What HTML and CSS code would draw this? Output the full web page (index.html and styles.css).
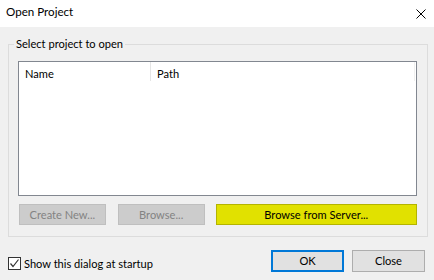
FILE: index.html
```html
<!DOCTYPE html>
<html lang="en">
<head>
    <meta charset="UTF-8">
    <meta name="viewport" content="width=device-width, initial-scale=1.0">
    <title>Open Project</title>
    <link rel="stylesheet" href="styles.css">
</head>
<body>
    <div class="titlebar">
        <span class="title">Open Project</span>
        <svg class="close-x" width="10" height="10" viewBox="0 0 10 10">
            <path d="M0.5 0.5 L9.5 9.5 M9.5 0.5 L0.5 9.5" stroke="#000" stroke-width="1" fill="none"/>
        </svg>
    </div>

    <fieldset class="group">
        <legend>Select project to open</legend>
        <div class="list">
            <div class="list-header">
                <div class="col col-name">Name</div>
                <div class="col col-path">Path</div>
            </div>
        </div>
        <div class="actions">
            <button class="btn btn-disabled btn-create" disabled>Create New...</button>
            <button class="btn btn-disabled btn-browse" disabled>Browse...</button>
            <button class="btn btn-server">Browse from Server...</button>
        </div>
    </fieldset>

    <div class="footer">
        <label class="startup">
            <span class="checkbox">
                <svg width="11" height="11" viewBox="0 0 11 11">
                    <path d="M1.5 5.5 L4 8.5 L9.5 1.5" stroke="#333" stroke-width="1.2" fill="none"/>
                </svg>
            </span>
            Show this dialog at startup
        </label>
        <button class="btn btn-ok">OK</button>
        <button class="btn btn-close">Close</button>
    </div>
</body>
</html>
```

FILE: styles.css
```css
body {
    margin: 0;
    width: 434px;
    height: 280px;
    background-color: #f0f0f0;
    font-family: Lato, "Noto Sans", sans-serif;
    font-size: 11.1px;
    color: #000;
    overflow: hidden;
}
.titlebar {
    height: 27px;
    background-color: #fff;
    display: flex;
    align-items: center;
    justify-content: space-between;
    padding: 0 8px 0 6px;
}
.title {
    font-size: 11.6px;
    line-height: 16px;
    margin-bottom: 4px;
}
.close-x {
    display: block;
    margin-top: 1px;
}
.group {
    margin: 9px 6px 0 8px;
    padding: 9px 10px 11px 9px;
    border: 1px solid #dcdcdc;
    min-width: 0;
}
.group legend {
    padding: 0 2px;
    margin-left: -4px;
    line-height: 16px;
}
.list {
    box-sizing: border-box;
    width: 399px;
    height: 135px;
    background-color: #fff;
    border: 1px solid #828790;
}
.list-header {
    display: flex;
    height: 19px;
}
.col {
    box-sizing: border-box;
    height: 19px;
    padding: 4px 0 0 6px;
    line-height: 15px;
    border-right: 1px solid #e5e5e5;
}
.col-name {
    width: 132px;
}
.col-path {
    width: 264px;
    border-right-color: #f0f0f0;
}
.actions {
    display: flex;
    gap: 12px;
    margin-top: 8px;
    padding-left: 1px;
}
.btn {
    box-sizing: border-box;
    height: 21px;
    font-family: inherit;
    font-size: 11.1px;
    line-height: 16px;
    padding: 0;
    border: 1px solid #adadad;
    background-color: #e1e1e1;
    color: #000;
}
.btn-disabled {
    width: 87px;
    background-color: #cccccc;
    border-color: #bfbfbf;
    color: #838383;
}
.btn-server {
    width: 202px;
    margin-left: -1px;
    background-color: #e1e100;
    border-color: #b4b400;
}
.footer {
    display: flex;
    align-items: center;
    margin-top: 13px;
    padding: 0 9px 0 8px;
    gap: 8px;
}
.startup {
    display: flex;
    align-items: center;
    gap: 3px;
    margin-top: 5px;
    line-height: 16px;
}
.checkbox {
    box-sizing: border-box;
    width: 13px;
    height: 13px;
    border: 1px solid #333;
    background-color: #fff;
    display: flex;
    align-items: center;
    justify-content: center;
}
.checkbox svg {
    display: block;
}
.btn-ok {
    margin-left: auto;
    width: 73px;
    height: 22px;
    border: 2px solid #0078d7;
}
.btn-close {
    width: 73px;
    height: 22px;
}
```
